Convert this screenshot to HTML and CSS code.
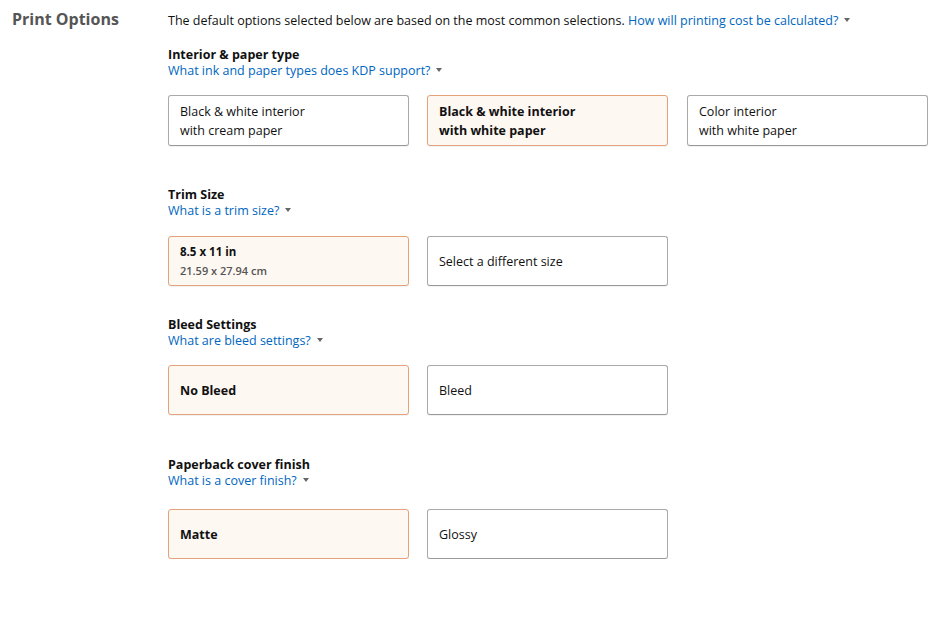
FILE: index.html
```html
<!DOCTYPE html>
<html>
<head>
<meta charset="utf-8">
<link rel="stylesheet" href="styles.css">
</head>
<body>
<div class="page">
  <h2 class="side-title">Print Options</h2>
  <div class="content">
    <p class="intro">The default options selected below are based on the most common selections. <a class="link" href="#">How will printing cost be calculated?</a><span class="caret"></span></p>

    <section class="group g1">
      <div class="group-title">Interior &amp; paper type</div>
      <div class="help"><a class="link" href="#">What ink and paper types does KDP support?</a><span class="caret"></span></div>
      <div class="options tall">
        <div class="opt"><span>Black &amp; white interior</span><span>with cream paper</span></div>
        <div class="opt selected"><span>Black &amp; white interior</span><span>with white paper</span></div>
        <div class="opt"><span>Color interior</span><span>with white paper</span></div>
      </div>
    </section>

    <section class="group g2">
      <div class="group-title">Trim Size</div>
      <div class="help"><a class="link" href="#">What is a trim size?</a><span class="caret"></span></div>
      <div class="options">
        <div class="opt selected small"><span class="size-main">8.5 x 11 in</span><span class="size-sub">21.59 x 27.94 cm</span></div>
        <div class="opt"><span>Select a different size</span></div>
      </div>
    </section>

    <section class="group g3">
      <div class="group-title">Bleed Settings</div>
      <div class="help"><a class="link" href="#">What are bleed settings?</a><span class="caret"></span></div>
      <div class="options">
        <div class="opt selected"><span>No Bleed</span></div>
        <div class="opt"><span>Bleed</span></div>
      </div>
    </section>

    <section class="group g4">
      <div class="group-title">Paperback cover finish</div>
      <div class="help"><a class="link" href="#">What is a cover finish?</a><span class="caret"></span></div>
      <div class="options">
        <div class="opt selected"><span>Matte</span></div>
        <div class="opt"><span>Glossy</span></div>
      </div>
    </section>
  </div>
</div>
</body>
</html>
```

FILE: styles.css
```css
html, body {
  margin: 0;
  padding: 0;
  background: #fff;
}
body {
  font-family: "Open Sans", "Noto Sans", "Liberation Sans", sans-serif;
  color: #111;
  font-size: 13px;
}
.page {
  display: grid;
  grid-template-columns: 168px 1fr;
}
.side-title {
  margin: 0;
  padding: 9px 0 0 12px;
  font-size: 16px;
  line-height: 20px;
  font-weight: 700;
  color: #555;
}
.content {
  padding-top: 13px;
}
.intro {
  margin: 0;
  font-size: 12.5px;
  line-height: 16px;
  color: #111;
}
.link {
  color: #0066c0;
  text-decoration: none;
}
.caret {
  display: inline-block;
  width: 0;
  height: 0;
  border-left: 3px solid transparent;
  border-right: 3px solid transparent;
  border-top: 4px solid #666;
  margin-left: 6px;
  vertical-align: 3px;
}
.group-title {
  font-weight: 700;
  font-size: 12.5px;
  line-height: 16px;
}
.help {
  font-size: 12.5px;
  line-height: 16px;
}
.g1 { margin-top: 18px; }
.g2 { margin-top: 41px; }
.g3 { margin-top: 31px; }
.g4 { margin-top: 42px; }
.options {
  display: grid;
  grid-template-columns: 241px 241px 241px;
  column-gap: 18px;
  margin-top: 16px;
}
.tall { grid-template-columns: 241px 241px 242px; }
.g2 .options { margin-top: 17px; }
.g4 .options { margin-top: 20px; }
.opt {
  box-sizing: border-box;
  height: 50px;
  border: 1px solid #a9a9a9;
  border-bottom-color: #999;
  border-radius: 3px;
  padding: 0 11px;
  display: flex;
  flex-direction: column;
  justify-content: center;
  font-size: 12.5px;
  line-height: 19px;
  color: #111;
  box-shadow: 0 1px 1px rgba(0,0,0,0.06);
}
.tall .opt { height: 51px; }
.tall .opt:last-child { margin-left: 1px; }
.opt.selected {
  background: #fef8f2;
  border-color: #e3a27a;
  font-weight: 700;
}
.size-main {
  font-size: 11.5px;
  font-weight: 700;
}
.size-sub {
  font-size: 11px;
  font-weight: 600;
  color: #555;
}
```
